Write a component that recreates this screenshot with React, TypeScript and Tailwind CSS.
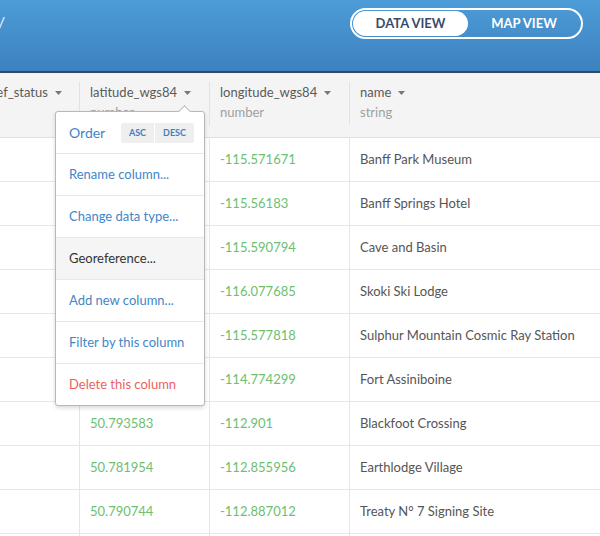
const rows = [
    { lat: '51.178224', lon: '-115.571671', name: 'Banff Park Museum' },
    { lat: '51.164437', lon: '-115.56183', name: 'Banff Springs Hotel' },
    { lat: '51.169062', lon: '-115.590794', name: 'Cave and Basin' },
    { lat: '51.529854', lon: '-116.077685', name: 'Skoki Ski Lodge' },
    { lat: '51.144167', lon: '-115.577818', name: 'Sulphur Mountain Cosmic Ray Station' },
    { lat: '54.337013', lon: '-114.774299', name: 'Fort Assiniboine' },
    { lat: '50.793583', lon: '-112.901', name: 'Blackfoot Crossing' },
    { lat: '50.781954', lon: '-112.855956', name: 'Earthlodge Village' },
    { lat: '50.790744', lon: '-112.887012', name: 'Treaty N° 7 Signing Site' },
    { lat: '50.782101', lon: '-112.860423', name: 'Siksika Nation' },
]

const columns = [
    { name: 'georef_status', type: 'text', width: 'w-[119px]' },
    { name: 'latitude_wgs84', type: 'number', width: 'w-[130px]' },
    { name: 'longitude_wgs84', type: 'number', width: 'w-[140px]' },
    { name: 'name', type: 'string', width: 'w-[300px]' },
]

const menuItems = [
    { label: 'Rename column...', tone: 'text-[#3f86c8]' },
    { label: 'Change data type...', tone: 'text-[#3f86c8]' },
    { label: 'Georeference...', tone: 'text-[#333] bg-[#f5f5f5]' },
    { label: 'Add new column...', tone: 'text-[#3f86c8]' },
    { label: 'Filter by this column', tone: 'text-[#3f86c8]' },
    { label: 'Delete this column', tone: 'text-[#ec5f5f]' },
]

function Caret() {
    return (
        <svg width="7" height="4" viewBox="0 0 7 4" className="ml-[7px] mt-px">
            <path d="M0 0h7L3.5 4z" fill="#777" />
        </svg>
    )
}

function ColumnMenu() {
    return (
        <div className="absolute left-[55px] top-[111px] w-[150px] rounded-[3px] border border-[#b8b8b8] bg-white shadow-[0_2px_4px_rgba(0,0,0,0.15)]">
            {/* notch */}
            <div className="absolute -top-[5px] left-[124px] h-[9px] w-[9px] rotate-45 border-l border-t border-[#b8b8b8] bg-white" />
            <div className="relative flex h-[42px] items-center justify-between border-b border-[#e8e8e8] pl-[13px] pr-[10px]">
                <span className="text-[14px] text-[#3f86c8]">Order</span>
                <div className="flex gap-px">
                    <button className="h-[20px] w-[33px] rounded-l-[2px] bg-[#efefef] text-[9px] font-bold text-[#3f7fbf]">ASC</button>
                    <button className="h-[20px] w-[39px] rounded-r-[2px] bg-[#efefef] text-[9px] font-bold text-[#3f7fbf]">DESC</button>
                </div>
            </div>
            {menuItems.map((item, i) => (
                <div
                    key={item.label}
                    className={`flex items-center pl-[13px] text-[13px] ${item.tone} ${i < menuItems.length - 1 ? 'h-[42px] border-b border-[#e8e8e8]' : 'h-[41px]'}`}
                >
                    {item.label}
                </div>
            ))}
        </div>
    )
}

export default function App() {
    return (
        <div className="relative h-[536px] w-[600px] overflow-hidden bg-white font-['Lato','Noto_Sans',sans-serif]">
            <header className="flex h-[73px] items-start justify-between border-b-2 border-[#34495e] bg-gradient-to-b from-[#4c9cd7] to-[#3d81c0]">
                <div className="flex w-[5px] justify-end whitespace-nowrap pt-[3px] text-[22px] font-light text-white">
                    Historic Places Directory
                </div>
                <div className="mr-[17px] mt-[8px] flex h-[31px] w-[233px] rounded-full border-2 border-white p-px">
                    <button className="h-full w-[115px] rounded-full bg-white text-[13px] font-bold text-[#3b4b6b]">DATA VIEW</button>
                    <button className="h-full flex-1 text-[13px] font-bold text-white">MAP VIEW</button>
                </div>
            </header>

            <div className="-ml-[39px]">
                <div className="flex h-[65px] border-b border-[#e0e0e0] bg-[#f4f4f4] pt-[9px]">
                    {columns.map((col) => (
                        <div key={col.name} className={`${col.width} shrink-0`}>
                            <div className="h-[43px] border-r border-[#e2e2e2] pl-[10px] text-[13px] leading-[20px]">
                                <div className="flex items-center text-[#5a5a5a]">
                                    {col.name}
                                    <Caret />
                                </div>
                                <div className="text-[#a0a0a0]">{col.type}</div>
                            </div>
                        </div>
                    ))}
                </div>

                {rows.map((row) => (
                    <div key={row.name} className="flex h-[44px] border-b border-[#e6e6e6] text-[13px]">
                        <div className="w-[119px] shrink-0 border-r border-[#e6e6e6]" />
                        <div className="flex w-[130px] shrink-0 items-center border-r border-[#e6e6e6] pl-[10px] text-[#6cc070]">{row.lat}</div>
                        <div className="flex w-[140px] shrink-0 items-center border-r border-[#e6e6e6] pl-[10px] text-[#6cc070]">{row.lon}</div>
                        <div className="flex w-[300px] shrink-0 items-center pl-[10px] text-[#555]">{row.name}</div>
                    </div>
                ))}
            </div>

            <ColumnMenu />
        </div>
    )
}
